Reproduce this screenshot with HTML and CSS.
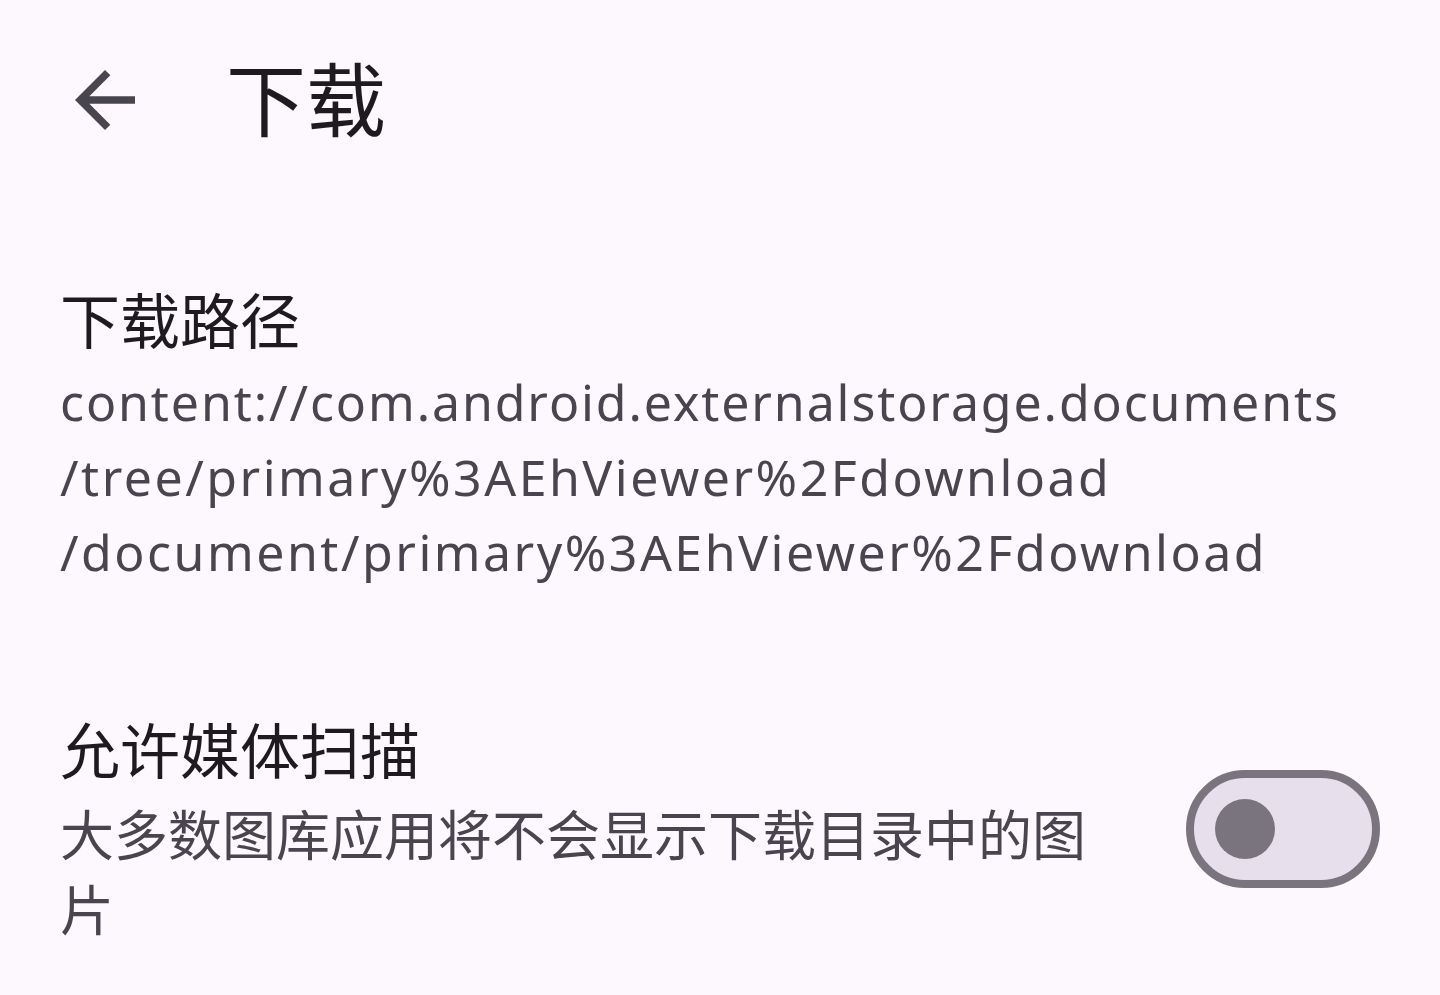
FILE: index.html
```html
<!DOCTYPE html>
<html lang="zh-CN">
<head>
<meta charset="utf-8">
<title>下载</title>
<link rel="stylesheet" href="styles.css">
</head>
<body>
<div class="screen">
  <header class="topbar">
    <button class="back" aria-label="返回">
      <svg viewBox="0 0 24 24" width="90" height="90"><path d="M20 11H7.83l5.59-5.59L12 4l-8 8 8 8 1.41-1.41L7.83 13H20v-2z" fill="#49454f"/></svg>
    </button>
    <h1 class="title">下载</h1>
  </header>
  <section class="pref pref-path">
    <div class="pref-text">
      <div class="pref-title">下载路径</div>
      <div class="pref-summary path">
        <span class="line">content://com.android.externalstorage.documents</span>
        <span class="line">/tree/primary%3AEhViewer%2Fdownload</span>
        <span class="line">/document/primary%3AEhViewer%2Fdownload</span>
      </div>
    </div>
  </section>
  <section class="pref pref-switch">
    <div class="pref-text">
      <div class="pref-title">允许媒体扫描</div>
      <div class="pref-summary cjk">大多数图库应用将不会显示下载目录中的图片</div>
    </div>
    <div class="switch" role="switch" aria-checked="false">
      <span class="thumb"></span>
    </div>
  </section>
</div>
</body>
</html>
```
FILE: styles.css
```css
html, body {
  margin: 0;
  padding: 0;
  background: #fdf8fd;
}
body {
  font-family: "Noto Sans", "Noto Sans CJK SC", sans-serif;
  color: #1d1b20;
}
.screen {
  width: 1440px;
  height: 995px;
  overflow: hidden;
}
.topbar {
  height: 200px;
  display: flex;
  align-items: center;
}
.back {
  margin-left: 60px;
  width: 90px;
  height: 90px;
  padding: 0;
  border: 0;
  background: none;
  display: flex;
}
.title {
  margin: 0 0 10px 76px;
  font-family: "Noto Sans CJK SC", sans-serif;
  font-weight: 400;
  font-size: 80px;
  line-height: 80px;
  color: #1d1b20;
}
.pref {
  display: flex;
  align-items: center;
  padding: 0 60px 0 60px;
}
.pref-path {
  padding-top: 78px;
}
.pref-switch {
  padding-top: 118px;
  gap: 86px;
}
.pref-text {
  flex: 1;
  min-width: 0;
}
.pref-title {
  font-family: "Noto Sans CJK SC", sans-serif;
  font-size: 60px;
  line-height: 80px;
  margin-bottom: 7px;
  color: #1d1b20;
}
.pref-summary {
  color: #49454f;
  line-height: 75px;
}
.path {
  font-family: "Noto Sans", sans-serif;
  font-size: 50px;
  letter-spacing: 1.9px;
}
.path .line {
  display: block;
  white-space: nowrap;
}
.path .line + .line {
  letter-spacing: 2.5px;
}
.cjk {
  font-family: "Noto Sans CJK SC", sans-serif;
  font-size: 54px;
}
.switch {
  box-sizing: border-box;
  width: 194px;
  height: 118px;
  margin-top: 4px;
  border: 8px solid #79747e;
  border-radius: 60px;
  background: #e7e0ec;
  display: flex;
  align-items: center;
  padding-left: 21px;
  flex: none;
}
.thumb {
  width: 60px;
  height: 60px;
  border-radius: 50%;
  background: #79747e;
}
```
